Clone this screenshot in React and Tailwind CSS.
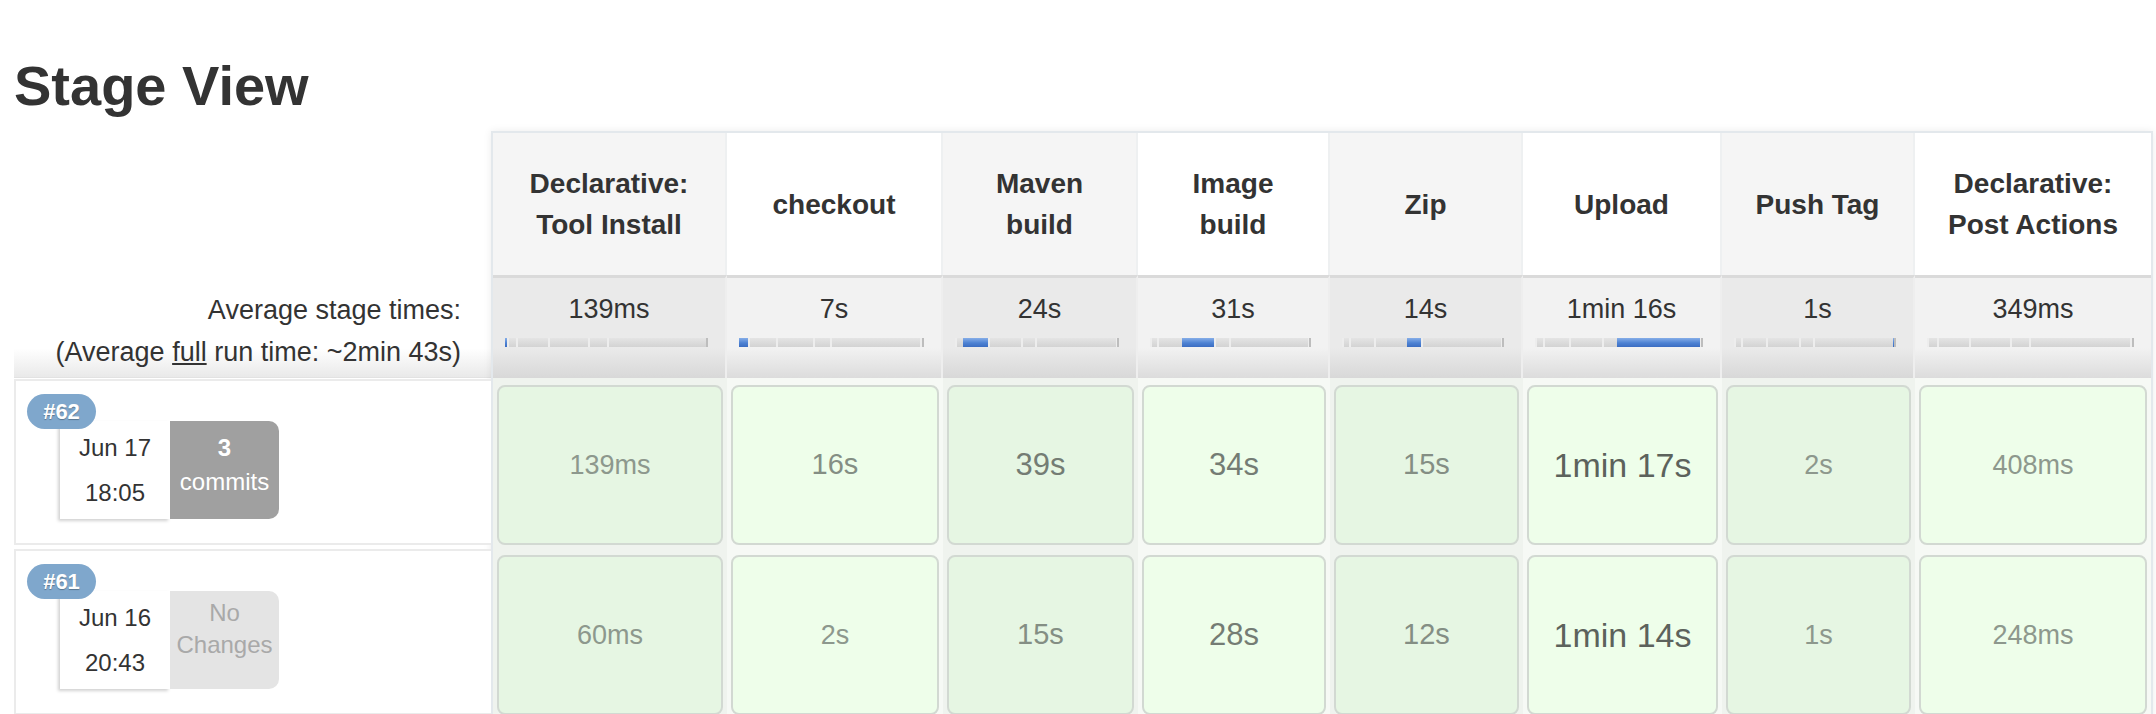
import React from "react";

const stages = [
  { name: ["Declarative:", "Tool Install"], avg: "139ms", secs: 0.139 },
  { name: ["checkout"], avg: "7s", secs: 7 },
  { name: ["Maven", "build"], avg: "24s", secs: 24 },
  { name: ["Image", "build"], avg: "31s", secs: 31 },
  { name: ["Zip"], avg: "14s", secs: 14 },
  { name: ["Upload"], avg: "1min 16s", secs: 76 },
  { name: ["Push Tag"], avg: "1s", secs: 1 },
  { name: ["Declarative:", "Post Actions"], avg: "349ms", secs: 0.349 },
];

const total = stages.reduce((a, s) => a + s.secs, 0);

const runs = [
  {
    id: 62,
    date: "Jun 17",
    time: "18:05",
    commits: 3,
    cells: [
      ["139ms", "sm"], ["16s", "md"], ["39s", "lg"], ["34s", "lg"],
      ["15s", "md"], ["1min 17s", "xl"], ["2s", "sm"], ["408ms", "sm"],
    ],
  },
  {
    id: 61,
    date: "Jun 16",
    time: "20:43",
    commits: 0,
    cells: [
      ["60ms", "sm"], ["2s", "sm"], ["15s", "md"], ["28s", "lg"],
      ["12s", "md"], ["1min 14s", "xl"], ["1s", "sm"], ["248ms", "sm"],
    ],
  },
];

const tone = {
  sm: "text-[27px] text-[#8d988d]",
  md: "text-[29px] text-[#848e84]",
  lg: "text-[31px] text-[#747c74]",
  xl: "text-[34px] text-[#5c625c]",
};

const cols = "grid grid-cols-[234px_216px_195px_192px_193px_199px_193px_236px]";

function Bar({ active }) {
  return (
    <div className="ml-[12px] mr-[17px] mt-[8px] flex h-[9px] overflow-hidden bg-[#d6d6d6] border-r-2 border-[#bdbdbd]">
      {stages.map((s, j) => (
        <div
          key={j}
          className={
            j === active
              ? "h-full shrink-0 min-w-[2px] bg-[linear-gradient(to_bottom,#86aee8,#4d82d3_55%,#3b6dc2)]"
              : "h-full shrink-0 border-l-2 border-[#ededed] first:border-l-0 bg-[linear-gradient(to_bottom,#e4e4e4,#d3d3d3)]"
          }
          style={{ width: `${(s.secs / total) * 100}%` }}
        />
      ))}
    </div>
  );
}

function RunInfo({ run }) {
  return (
    <div className="h-[170px] pt-[1px] pb-[3px]">
      <div className="relative h-full border-2 border-r-0 border-[#ebebeb] bg-white">
        <div className="absolute left-[11px] top-[13px] z-10 flex h-[35px] w-[69px] items-center justify-center rounded-full bg-[#7fa7cc] text-[22px] font-bold text-white [text-shadow:0_1px_1px_rgba(0,0,0,0.3)]">
          #{run.id}
        </div>
        <div className="ml-[44px] mt-[40px] flex h-[98px]">
          <div className="w-[110px] bg-white pt-[4px] text-center text-[24px] leading-[45px] text-[#333] shadow-[-2px_2px_3px_rgba(0,0,0,0.18)]">
            <div>{run.date}</div>
            <div>{run.time}</div>
          </div>
          {run.commits > 0 ? (
            <div className="w-[109px] rounded-r-[10px] bg-[#a0a0a0] pt-[10px] text-center text-[24px] leading-[34px] text-white">
              <div className="font-bold">{run.commits}</div>
              <div>commits</div>
            </div>
          ) : (
            <div className="w-[109px] rounded-r-[10px] bg-[#e4e4e4] pt-[6px] text-center text-[24px] leading-[32px] text-[#a9a9a9]">
              <div>No</div>
              <div>Changes</div>
            </div>
          )}
        </div>
      </div>
    </div>
  );
}

export default function App() {
  return (
    <div className="min-h-screen bg-white pl-[14px] font-['Liberation_Sans',Arial,sans-serif] text-[#333]">
      <h2 className="pt-[58px] text-[56px] font-bold leading-none text-[#333]">Stage View</h2>
      <div className="mt-[17px] flex">
        <div className="w-[477px] shrink-0">
          <div className="h-[144px]" />
          <div className="h-[103px] bg-[linear-gradient(to_bottom,#ffffff_72%,#e9e9e9)] border-b border-[#e2e2e2] pr-[30px] pt-[14px] text-right text-[27px] leading-[42px] text-[#333]">
            <div>Average stage times:</div>
            <div>
              (Average <span className="underline">full</span> run time: ~2min 43s)
            </div>
          </div>
          {runs.map((r) => (
            <RunInfo key={r.id} run={r} />
          ))}
        </div>

        <div className="w-[1662px] shrink-0 border-x-2 border-t-2 border-[#e3e8ec] shadow-[0_0_8px_rgba(0,0,0,0.08)]">
          <div className={cols}>
            {stages.map((s, i) => (
              <div
                key={i}
                className={`flex h-[142px] flex-col items-center justify-center border-r-2 border-[#eef0f1] last:border-r-0 text-center text-[28px] font-bold leading-[41px] text-[#333] ${
                  i % 2 === 0 ? "bg-[#f5f5f5]" : "bg-white"
                }`}
              >
                {s.name.map((n) => (
                  <div key={n}>{n}</div>
                ))}
              </div>
            ))}
          </div>

          <div className={cols}>
            {stages.map((s, i) => (
              <div
                key={i}
                className={`h-[103px] border-t-[3px] border-r-2 border-t-[#dadada] border-r-[#eeeeee] last:border-r-0 ${
                  i % 2 === 0
                    ? "bg-[linear-gradient(to_bottom,#eaeaea_70%,#d8d8d8)]"
                    : "bg-[linear-gradient(to_bottom,#f2f2f2_70%,#dcdcdc)]"
                }`}
              >
                <div className="pt-[10px] text-center text-[27px] leading-[42px] text-[#333]">{s.avg}</div>
                <Bar active={i} />
              </div>
            ))}
          </div>

          {runs.map((r) => (
            <div key={r.id} className={cols}>
              {r.cells.map(([t, size], i) => (
                <div
                  key={i}
                  className={`h-[170px] px-[4px] pt-[7px] pb-[3px] ${i % 2 === 0 ? "bg-[#eff3ee]" : "bg-[#f6f9f5]"}`}
                >
                  <div
                    className={`flex h-full items-center justify-center rounded-[8px] border-2 border-[#d2d9d2] ${
                      i % 2 === 0 ? "bg-[#e6f6e3]" : "bg-[#eefeea]"
                    } ${tone[size]}`}
                  >
                    {t}
                  </div>
                </div>
              ))}
            </div>
          ))}
        </div>
      </div>
    </div>
  );
}
